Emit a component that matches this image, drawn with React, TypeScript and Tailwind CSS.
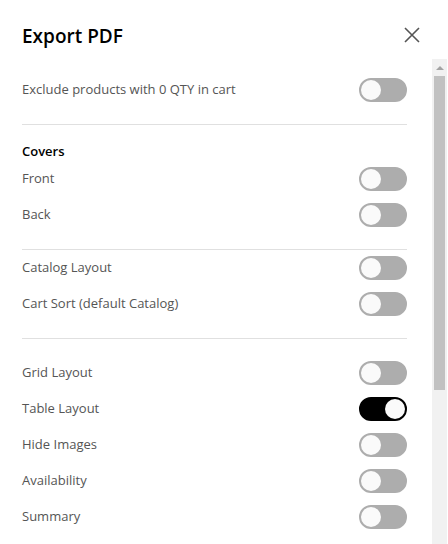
import { useState } from 'react';

type Row = { label: string; on?: boolean };

function Toggle({ on, onClick }: { on: boolean; onClick: () => void }) {
  return (
    <button
      onClick={onClick}
      className={`flex h-6 w-12 shrink-0 items-center rounded-full border-2 ${
        on ? 'justify-end border-black bg-black' : 'justify-start border-[#adadad] bg-[#adadad]'
      }`}
    >
      <span className="h-5 w-5 rounded-full bg-[#fafafa]" />
    </button>
  );
}

function ToggleRow({ label, on, onClick }: { label: string; on: boolean; onClick: () => void }) {
  return (
    <div className="flex h-9 items-center justify-between">
      <span className="text-[13px] text-[#555]">{label}</span>
      <Toggle on={on} onClick={onClick} />
    </div>
  );
}

export default function App() {
  const [state, setState] = useState<Record<string, boolean>>({ 'Table Layout': true });
  const flip = (k: string) => setState((s) => ({ ...s, [k]: !s[k] }));
  const row = (r: Row) => (
    <ToggleRow key={r.label} label={r.label} on={!!state[r.label]} onClick={() => flip(r.label)} />
  );

  return (
    <div
      className="flex h-[544px] w-[448px] flex-col overflow-hidden bg-white"
      style={{ fontFamily: '"Open Sans", "Noto Sans", sans-serif' }}
    >
      {/* header */}
      <div className="flex h-[59px] shrink-0 items-center justify-between pl-[22px] pr-[28px] pt-[13px]">
        <h1 className="text-[19px] font-semibold text-black">Export PDF</h1>
        <button className="-mt-[3px] text-[#555]">
          <svg width="16" height="16" viewBox="0 0 16 16" fill="none" stroke="currentColor" strokeWidth="1.6">
            <path d="M1 1 15 15M15 1 1 15" />
          </svg>
        </button>
      </div>

      <div className="flex min-h-0 flex-1">
        <div className="flex-1 overflow-hidden pl-[22px] pr-[25px]">
          <div className="mt-[13px]">{row({ label: 'Exclude products with 0 QTY in cart' })}</div>
          <div className="mt-4 h-px bg-[#e0e0e0]" />

          <div className="mt-[17px] text-[13px] font-semibold leading-[18px] text-black">Covers</div>
          <div className="mt-px">
            {row({ label: 'Front' })}
            {row({ label: 'Back' })}
          </div>
          <div className="mt-4 h-px bg-[#e0e0e0]" />

          <div>
            {row({ label: 'Catalog Layout' })}
            {row({ label: 'Cart Sort (default Catalog)' })}
          </div>
          <div className="mt-4 h-px bg-[#e0e0e0]" />

          <div className="mt-4">
            {['Grid Layout', 'Table Layout', 'Hide Images', 'Availability', 'Summary'].map((l) =>
              row({ label: l })
            )}
          </div>
        </div>

        {/* scrollbar */}
        <div className="mr-px flex w-[15px] shrink-0 flex-col items-center bg-[#f1f1f1]">
          <div className="flex h-[17px] w-full items-center justify-center">
            <div className="h-0 w-0 border-x-[4px] border-b-[4px] border-x-transparent border-b-[#a3a3a3]" />
          </div>
          <div className="h-[314px] w-[11px] bg-[#c1c1c1]" />
        </div>
      </div>
    </div>
  );
}
